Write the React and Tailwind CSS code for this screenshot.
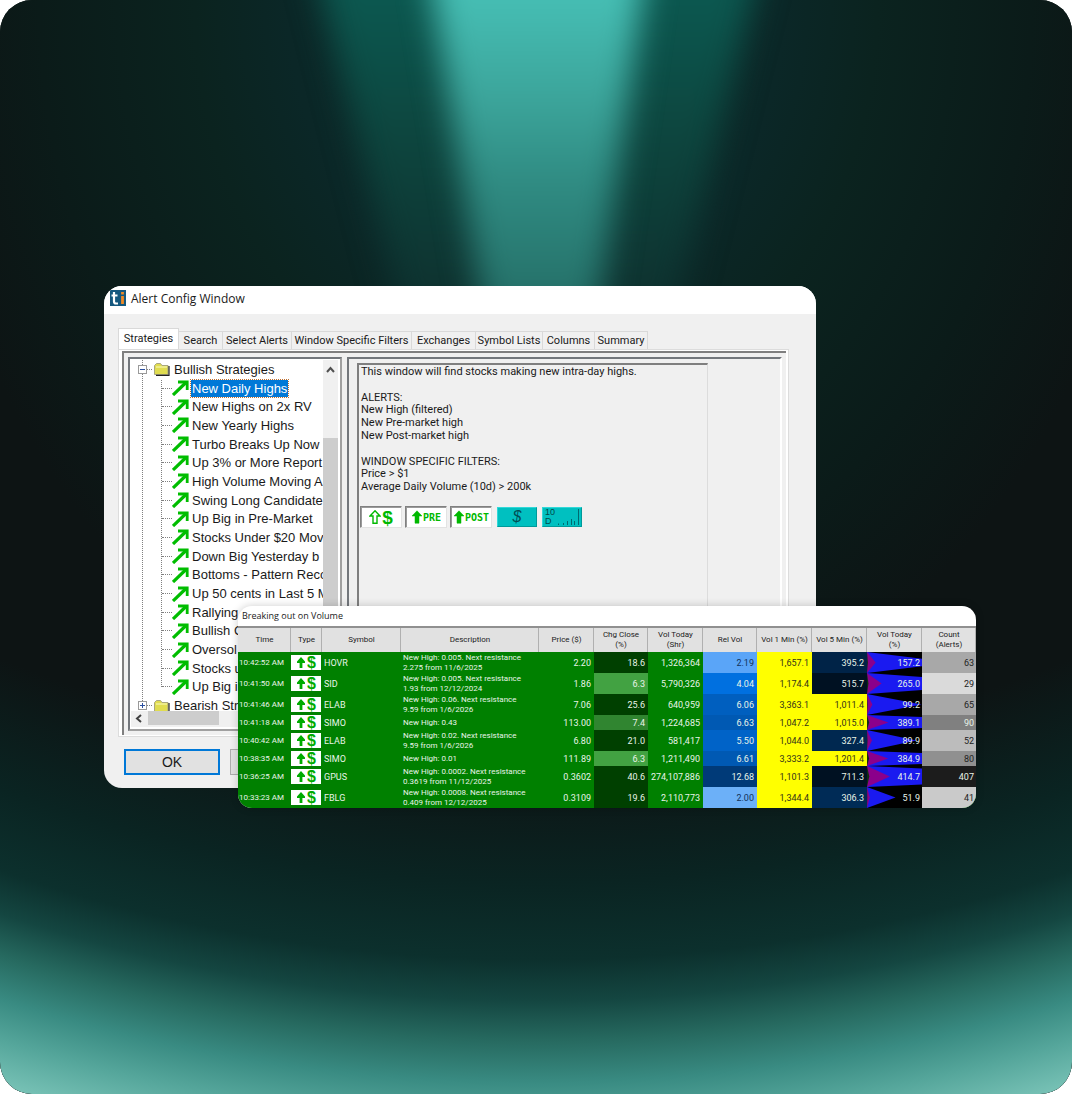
import React from 'react';

const tabs = [
  { label: 'Strategies', width: 'w-[61px]' },
  { label: 'Search', width: 'w-11' },
  { label: 'Select Alerts', width: 'w-[69px]' },
  { label: 'Window Specific Filters', width: 'w-[120px]' },
  { label: 'Exchanges', width: 'w-16' },
  { label: 'Symbol Lists', width: 'w-[67px]' },
  { label: 'Columns', width: 'w-[52px]' },
  { label: 'Summary', width: 'w-[53px]' },
];

const strategies = [
  'New Daily Highs',
  'New Highs on 2x RV',
  'New Yearly Highs',
  'Turbo Breaks Up Now',
  'Up 3% or More Report',
  'High Volume Moving A',
  'Swing Long Candidate',
  'Up Big in Pre-Market',
  'Stocks Under $20 Mov',
  'Down Big Yesterday b',
  'Bottoms - Pattern Reco',
  'Up 50 cents in Last 5 M',
  'Rallying',
  'Bullish C',
  'Oversol',
  'Stocks u',
  'Up Big i',
];

const description = [
  'This window will find stocks making new intra-day highs.',
  '',
  'ALERTS:',
  'New High (filtered)',
  'New Pre-market high',
  'New Post-market high',
  '',
  'WINDOW SPECIFIC FILTERS:',
  'Price > $1',
  'Average Daily Volume (10d) > 200k',
];

const columns = [
  { label: 'Time', width: 'w-[53px]' },
  { label: 'Type', width: 'w-[31px]' },
  { label: 'Symbol', width: 'w-[79px]' },
  { label: 'Description', width: 'w-[138px]' },
  { label: 'Price ($)', width: 'w-[55px]' },
  { label: 'Chg Close', unit: '(%)', width: 'w-[54px]' },
  { label: 'Vol Today', unit: '(Shr)', width: 'w-[55px]' },
  { label: 'Rel Vol', width: 'w-[54px]' },
  { label: 'Vol 1 Min (%)', width: 'w-[55px]' },
  { label: 'Vol 5 Min (%)', width: 'w-[55px]' },
  { label: 'Vol Today', unit: '(%)', width: 'w-[55px]' },
  { label: 'Count', unit: '(Alerts)', width: 'w-[54px]' },
];

const YELLOW = 'bg-[#ffff00] text-[#33331a]';

const alerts = [
  { time: '10:42:52 AM', symbol: 'HOVR', text: ['New High: 0.005. Next resistance', '2.275 from 11/6/2025'], price: '2.20', chg: '18.6', chgTone: 'bg-[#004000]', shares: '1,326,364', rel: '2.19', relTone: 'bg-[#5aa5f8] text-[#12325a]', v1: '1,657.1', v5: '395.2', v5Tone: 'bg-[#002347]', today: 157.2, count: '63', countTone: 'bg-[#a8a8a8] text-[#222]' },
  { time: '10:41:50 AM', symbol: 'SID', text: ['New High: 0.005. Next resistance', '1.93 from 12/12/2024'], price: '1.86', chg: '6.3', chgTone: 'bg-[#42a242]', shares: '5,790,326', rel: '4.04', relTone: 'bg-[#0070e0]', v1: '1,174.4', v5: '515.7', v5Tone: 'bg-[#001122]', today: 265.0, count: '29', countTone: 'bg-[#dadada] text-[#222]' },
  { time: '10:41:46 AM', symbol: 'ELAB', text: ['New High: 0.06. Next resistance', '9.59 from 1/6/2026'], price: '7.06', chg: '25.6', chgTone: 'bg-[#004000]', shares: '640,959', rel: '6.06', relTone: 'bg-[#005fbf]', v1: '3,363.1', v5: '1,011.4', v5Tone: YELLOW, today: 99.2, count: '65', countTone: 'bg-[#a8a8a8] text-[#222]' },
  { time: '10:41:18 AM', symbol: 'SIMO', text: ['New High: 0.43'], price: '113.00', chg: '7.4', chgTone: 'bg-[#308530]', shares: '1,224,685', rel: '6.63', relTone: 'bg-[#0059b3]', v1: '1,047.2', v5: '1,015.0', v5Tone: YELLOW, today: 389.1, count: '90', countTone: 'bg-[#808080]' },
  { time: '10:40:42 AM', symbol: 'ELAB', text: ['New High: 0.02. Next resistance', '9.59 from 1/6/2026'], price: '6.80', chg: '21.0', chgTone: 'bg-[#004000]', shares: '581,417', rel: '5.50', relTone: 'bg-[#0063c8]', v1: '1,044.0', v5: '327.4', v5Tone: 'bg-[#002850]', today: 89.9, count: '52', countTone: 'bg-[#bcbcbc] text-[#222]' },
  { time: '10:38:35 AM', symbol: 'SIMO', text: ['New High: 0.01'], price: '111.89', chg: '6.3', chgTone: 'bg-[#42a242]', shares: '1,211,490', rel: '6.61', relTone: 'bg-[#0059b3]', v1: '3,333.2', v5: '1,201.4', v5Tone: YELLOW, today: 384.9, count: '80', countTone: 'bg-[#909090] text-[#222]' },
  { time: '10:36:25 AM', symbol: 'GPUS', text: ['New High: 0.0002. Next resistance', '0.3619 from 11/12/2025'], price: '0.3602', chg: '40.6', chgTone: 'bg-[#004000]', shares: '274,107,886', rel: '12.68', relTone: 'bg-[#003a78]', v1: '1,101.3', v5: '711.3', v5Tone: 'bg-[#001122]', today: 414.7, count: '407', countTone: 'bg-[#1c1c1c]' },
  { time: '10:33:23 AM', symbol: 'FBLG', text: ['New High: 0.0008. Next resistance', '0.409 from 12/12/2025'], price: '0.3109', chg: '19.6', chgTone: 'bg-[#004000]', shares: '2,110,773', rel: '2.00', relTone: 'bg-[#6cb0f8] text-[#12325a]', v1: '1,344.4', v5: '306.3', v5Tone: 'bg-[#002b56]', today: 51.9, count: '41', countTone: 'bg-[#cacaca] text-[#222]' },
];

const Backdrop = () => (
  <svg className="absolute inset-0 w-full h-full" viewBox="0 0 1072 1094" preserveAspectRatio="none" aria-hidden="true">
    <defs>
      <radialGradient id="base" gradientUnits="userSpaceOnUse" cx="0" cy="0" r="1" gradientTransform="translate(536 0) scale(620 760)">
        <stop offset="0" stopColor="#0b2c2b" />
        <stop offset="0.4" stopColor="#0b2727" />
        <stop offset="0.55" stopColor="#0b231f" />
        <stop offset="0.8" stopColor="#0b1b19" />
        <stop offset="1" stopColor="#0d1414" />
      </radialGradient>
      <linearGradient id="core" x1="0" y1="0" x2="0" y2="1">
        <stop offset="0.12" stopColor="#46beb4" />
        <stop offset="0.33" stopColor="#3ca59b" />
        <stop offset="0.5" stopColor="#308c83" />
        <stop offset="0.71" stopColor="#27756d" />
        <stop offset="1" stopColor="#144540" />
      </linearGradient>
      <linearGradient id="wing" x1="0" y1="0" x2="0" y2="1">
        <stop offset="0.12" stopColor="#0c5850" />
        <stop offset="0.4" stopColor="#0d463f" />
        <stop offset="0.71" stopColor="#0e3431" />
        <stop offset="1" stopColor="#0b2422" />
      </linearGradient>
      <radialGradient id="floor" gradientUnits="userSpaceOnUse" cx="536" cy="-690" r="1860">
        <stop offset="0.78" stopColor="#0a2422" stopOpacity="0" />
        <stop offset="0.846" stopColor="#0a2422" />
        <stop offset="0.887" stopColor="#0c302d" />
        <stop offset="0.909" stopColor="#144641" />
        <stop offset="0.93" stopColor="#26695f" />
        <stop offset="0.953" stopColor="#398b82" />
        <stop offset="0.974" stopColor="#55a69b" />
        <stop offset="0.998" stopColor="#78c2b6" />
      </radialGradient>
      <filter id="soft" x="-30%" y="-20%" width="160%" height="140%" colorInterpolationFilters="sRGB">
        <feGaussianBlur stdDeviation="16" />
      </filter>
    </defs>
    <rect width="1072" height="1094" fill="url(#base)" />
    <path d="M308 -60H767L648 420H428Z" fill="url(#wing)" filter="url(#soft)" />
    <path d="M424 -60H650L583 420H500Z" fill="url(#core)" filter="url(#soft)" />
    <rect width="1072" height="1094" fill="url(#floor)" />
  </svg>
);

const TrendArrow = () => (
  <svg className="w-[17px] h-4 shrink-0" viewBox="0 0 17 16" fill="none" stroke="#00bd00" aria-hidden="true">
    <path d="M1 15 14 2.500" strokeWidth="3.200" />
    <path d="M6 2h9.200V10" strokeWidth="2.800" />
  </svg>
);

const Folder = () => (
  <svg className="w-4 h-[14px] shrink-0" viewBox="0 0 16 14" aria-hidden="true">
    <path d="M0.500 3.500 2.500 1.500h4l1.500 2H14v9H0.500z" fill="#e0dc50" stroke="#a8a680" />
    <path d="M2 5h11" stroke="#fbfbc0" />
    <path d="M15 4v9.400H2" fill="none" stroke="#222" strokeWidth="1.200" />
  </svg>
);

const Expander = ({ open }) => (
  <svg className="w-[9px] h-[9px] shrink-0" viewBox="0 0 9 9" aria-hidden="true">
    <rect x="0.5" y="0.5" width="8" height="8" fill="#fff" stroke="#9a9a9a" />
    <path d={open ? 'M2 4.500h5' : 'M2 4.500h5M4.500 2v5'} stroke="#2a4fa0" />
  </svg>
);

const UpArrow = ({ outline }) => (
  <svg className="w-3 h-[14px] shrink-0" viewBox="0 0 12 14" aria-hidden="true">
    <path d="M6 0.800 11 6H8v7.200H4V6H1z" fill={outline ? '#fff' : '#00b800'} stroke="#00b800" strokeWidth={outline ? 1.400 : 0.500} />
  </svg>
);

const AlertBadge = ({ outline, children }) => (
  <div className="w-[42px] h-[22px] flex items-center justify-center bg-white border border-r-[#e3e3e3] border-b-[#e3e3e3] border-t-[#808080] border-l-[#808080] shadow-[inset_1px_1px_0_#9a9a9a] text-[#00b800] font-bold">
    <UpArrow outline={outline} />
    {children}
  </div>
);

const TreeRow = ({ label, selected }) => (
  <li className="flex items-center pl-[31px]">
    <span className="w-[10px] border-t border-dotted border-[#808080]" />
    <TrendArrow />
    <span className={`ml-[2px] px-px whitespace-nowrap leading-[17px] ${selected ? 'bg-[#0078d7] text-white outline-1 outline-dotted outline-[#c07030]' : ''}`}>
      {label}
    </span>
  </li>
);

const AlertConfigWindow = () => (
  <section className="mr-40 rounded-[18px] overflow-hidden bg-[#f0f0f0] text-[#1a1a1a]">
    <header className="h-7 bg-white flex items-start pt-1 pl-[6px] gap-[5px]">
      <svg className="w-4 h-4 shrink-0" viewBox="0 0 16 16" aria-hidden="true">
        <rect width="16" height="16" fill="#15587f" />
        <path d="M4 2v9.500q0 2 2 2h2M1.500 5.500h6" fill="none" stroke="#fff" strokeWidth="2.200" />
        <path d="M12.500 6v8M12.500 2v2.400" stroke="#f08a24" strokeWidth="2.800" />
      </svg>
      <h1 className="font-['Open_Sans',sans-serif] text-[12px] leading-[18px]">Alert Config Window</h1>
    </header>

    <div className="pt-[14px] pl-[14px] pr-[27px] pb-[13px]">
      <nav className="flex items-end font-['Roboto',sans-serif] text-[11px]" role="tablist">
        {tabs.map((tab, index) => (
          <button
            key={tab.label}
            type="button"
            role="tab"
            aria-selected={index === 0}
            className={`${tab.width} whitespace-nowrap border border-b-0 border-[#d9d9d9] ${index === 0 ? 'h-[21px] bg-white' : 'h-[18px] pt-px border-l-0'}`}
          >
            {tab.label}
          </button>
        ))}
      </nav>

      <div className="border border-[#dcdcdc] bg-white p-px pl-[3px] pr-[2px]">
        <div className="h-96 flex gap-[5px] bg-[#f0f0f0] border-t-2 border-l-2 border-[#7f7f7f] pt-1 pl-1 pr-1 pb-1">
          <div className="w-[214px] shrink-0 flex flex-col bg-white border-2 border-t-[#73777c] border-l-[#73777c] border-r-[#a0a0a0] border-b-[#a0a0a0] pt-px pl-px pr-[2px] pb-[2px]">
            <div className="flex-1 min-h-0 flex">
              <div className="flex-1 min-w-0 overflow-hidden">
                <ul className="relative h-[355px] grid auto-rows-fr text-[13px]">
                  <li className="absolute left-[11px] top-0 bottom-2 border-l border-dotted border-[#808080]" aria-hidden="true" />
                  <li className="absolute left-[30px] top-5 bottom-7 border-l border-dotted border-[#808080]" aria-hidden="true" />
                  <li className="relative flex items-center pl-[7px]">
                    <Expander open />
                    <span className="w-[5px] mr-[2px] border-t border-dotted border-[#808080]" />
                    <Folder />
                    <span className="ml-1 whitespace-nowrap">Bullish Strategies</span>
                  </li>
                  {strategies.map((name, index) => (
                    <TreeRow key={name} label={name} selected={index === 0} />
                  ))}
                  <li className="relative flex items-center pl-[7px]">
                    <Expander />
                    <span className="w-[5px] mr-[2px] border-t border-dotted border-[#808080]" />
                    <Folder />
                    <span className="ml-1 whitespace-nowrap">Bearish Str</span>
                  </li>
                </ul>
              </div>
              <div className="w-[15px] bg-[#f0f0f0]">
                <svg className="w-[15px] h-[18px]" viewBox="0 0 15 18" aria-hidden="true">
                  <path d="M4 12 7.500 8 11 12" fill="none" stroke="#505050" strokeWidth="2" />
                </svg>
                <div className="mt-[60px] h-[240px] bg-[#cdcdcd]" />
              </div>
            </div>
            <div className="h-4 flex bg-[#f0f0f0]">
              <svg className="w-[17px] h-4" viewBox="0 0 17 16" aria-hidden="true">
                <path d="M10 4 6 7.500 10 11" fill="none" stroke="#404040" strokeWidth="2" />
              </svg>
              <div className="w-[71px] h-[14px] bg-[#cdcdcd]" />
            </div>
          </div>

          <div className="flex-1 min-w-0 border-t-2 border-l-2 border-[#73777c] border-r-2 border-r-white pt-1 pl-2 pr-[72px]">
            <div className="h-full border-t-2 border-l-2 border-[#7f7f7f] border-r border-r-[#dcdcdc] pt-px pl-px">
              <div className="h-32 pl-px grid auto-rows-fr font-['Roboto',sans-serif] text-[11px] leading-3">
                {description.map((line, index) => (
                  <p key={index} className="whitespace-nowrap">{line}</p>
                ))}
              </div>
              <div className="mt-3 flex items-center gap-[3px]">
                <AlertBadge outline><span className="ml-px text-[19px] leading-none">$</span></AlertBadge>
                <AlertBadge><span className="font-['DejaVu_Sans_Mono',monospace] text-[10px]">PRE</span></AlertBadge>
                <AlertBadge><span className="font-['DejaVu_Sans_Mono',monospace] text-[10px]">POST</span></AlertBadge>
                <div className="ml-[2px] w-10 h-5 flex items-center justify-center bg-[#00c0c0] border border-t-[#30d8d8] border-l-[#30d8d8] border-r-[#009a9a] border-b-[#009a9a] text-[16px] italic leading-none text-[#004f55]">$</div>
                <div className="ml-[2px] w-10 h-5 flex bg-[#00c0c0] border border-t-[#30d8d8] border-l-[#30d8d8] border-r-[#009a9a] border-b-[#009a9a] text-[#004a4a]">
                  <span className="pl-[2px] text-[9px] leading-[9px]">10<br />D</span>
                  <svg className="ml-auto w-6 h-full" viewBox="0 0 24 18" stroke="#006a70" aria-hidden="true">
                    <path d="M1.500 15.500v1.500M6.500 15v2M10.500 13v4M14.500 11v6M17.500 13v4M21.500 1v16" />
                  </svg>
                </div>
              </div>
            </div>
          </div>
        </div>
      </div>

      <div className="mt-3 ml-[6px] flex gap-[10px] text-[14px]">
        <button type="button" className="w-24 h-[26px] bg-[#e1e1e1] border-2 border-[#0078d7]">OK</button>
        <button type="button" aria-label="Cancel" className="w-24 h-[26px] bg-[#e1e1e1] border border-[#adadad]" />
      </div>
    </div>
  </section>
);

const TypeIcon = () => (
  <span className="w-[30px] h-[15px] flex items-center justify-center gap-px bg-white text-[#00ab00]" role="img" aria-label="New high">
    <svg className="w-[10px] h-[13px]" viewBox="0 0 10 13" aria-hidden="true">
      <path d="M5 1 9 5.500V7H6.400v5H3.600V7H1V5.500z" fill="#00ab00" />
    </svg>
    <span className="font-['Liberation_Sans',sans-serif] text-[16px] font-bold leading-[15px]">$</span>
  </span>
);

// Nested wedges, each one ten times shorter than the one below it
const VolumeWedge = ({ value }) => (
  <svg className="absolute inset-0 w-full h-full" viewBox="0 0 100 100" preserveAspectRatio="none" aria-hidden="true">
    <polygon points={`0,0 ${value},50 0,100`} fill="#1a1af0" />
    <polygon points={`0,0 ${value / 10},50 0,100`} fill="#8b008b" />
    <polygon points={`0,0 ${value / 100},50 0,100`} fill="#103010" />
  </svg>
);

const BreakoutWindow = () => (
  <section className="absolute left-[134px] right-0 bottom-0 rounded-[14px] overflow-hidden bg-white shadow-[0_0_8px_rgba(0,0,0,0.2)]">
    <h2 className="h-[22px] pl-1 border-b-2 border-[#909090] font-['Open_Sans',sans-serif] text-[9px] leading-[20px] text-[#1a1a1a]">Breaking out on Volume</h2>
    <table className="w-full table-fixed border-collapse font-['Roboto',sans-serif] text-[9px] leading-[10px] text-[#e8f4e8]">
      <thead>
        <tr className="h-6 bg-[#e1e1e1] text-[8px] text-[#222]">
          {columns.map((col, index) => (
            <th key={index} scope="col" className={`${col.width} p-0 font-normal whitespace-nowrap shadow-[inset_-1px_0_0_#b0b0b0]`}>
              {col.label}
              {col.unit && <><br />{col.unit}</>}
            </th>
          ))}
        </tr>
      </thead>
      <tbody className="bg-[#008000]">
        {alerts.map((row) => (
          <tr key={row.time} className={row.text.length > 1 ? 'h-[21px]' : 'h-[15px]'}>
            <td className="p-0 pl-px text-[8px] whitespace-nowrap">{row.time}</td>
            <td className="p-0"><TypeIcon /></td>
            <td className="p-0 pl-[2px]">{row.symbol}</td>
            <td className="p-0 pl-[2px] text-[8px] whitespace-nowrap">{row.text.map((line) => <div key={line}>{line}</div>)}</td>
            <td className="p-0 pr-[3px] text-right">{row.price}</td>
            <td className={`p-0 pr-[3px] text-right ${row.chgTone}`}>{row.chg}</td>
            <td className="p-0 pr-[3px] text-right">{row.shares}</td>
            <td className={`p-0 pr-[3px] text-right ${row.relTone}`}>{row.rel}</td>
            <td className={`p-0 pr-[3px] text-right ${YELLOW}`}>{row.v1}</td>
            <td className={`p-0 pr-[3px] text-right ${row.v5Tone}`}>{row.v5}</td>
            <td className="relative p-0 pr-[2px] text-right bg-black">
              <VolumeWedge value={row.today} />
              <span className="relative">{row.today.toFixed(1)}</span>
            </td>
            <td className={`p-0 pr-[2px] text-right ${row.countTone}`}>{row.count}</td>
          </tr>
        ))}
      </tbody>
    </table>
  </section>
);

const App = () => (
  <main className="relative min-h-screen flex items-center rounded-[32px] overflow-hidden bg-[#0c1716] font-['Liberation_Sans',Arial,sans-serif]">
    <Backdrop />
    <div className="relative flex-1 min-w-0 pb-5 ml-[104px] mr-24">
      <AlertConfigWindow />
      <BreakoutWindow />
    </div>
  </main>
);

export default App;
